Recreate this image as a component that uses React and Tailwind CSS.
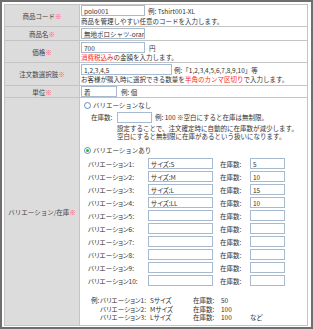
import React from 'react'

function Radio({ checked }) {
  return (
    <svg width="7" height="7" viewBox="0 0 14 14" className="shrink-0">
      <circle cx="7" cy="7" r="6" fill="#fff" stroke="#2a62a8" strokeWidth="1.4" />
      {checked && <circle cx="7" cy="7" r="3" fill="#2eb82e" />}
    </svg>
  )
}

function Box({ value, w }) {
  return (
    <div className={`h-[11px] ${w} shrink-0 border border-[#a7bad0] bg-white px-[2px] flex items-center text-[#333] overflow-hidden`}>
      {value}
    </div>
  )
}

function Label({ children }) {
  return (
    <div className="w-[75px] shrink-0 bg-[#dcdcdc] border-r border-[#c4c4c4] flex items-center justify-center text-[#444]">
      <span>{children}<span className="text-[#ff5a5a]">※</span></span>
    </div>
  )
}

const variations = [
  ['サイズ:S', '5'],
  ['サイズ:M', '10'],
  ['サイズ:L', '15'],
  ['サイズ:LL', '10'],
  ['', ''],
  ['', ''],
  ['', ''],
  ['', ''],
  ['', ''],
  ['', ''],
]

const examples = [
  ['例:', 'バリエーション1:', 'Sサイズ', '在庫数:', '50', ''],
  ['', 'バリエーション2:', 'Mサイズ', '在庫数:', '100', ''],
  ['', 'バリエーション3:', 'Lサイズ', '在庫数:', '100', 'など'],
]

export default function App() {
  return (
    <div className="w-[313px] h-[329px] overflow-hidden whitespace-nowrap border-2 border-[#6e6e6e] bg-white p-[2px] font-['Noto_Sans_CJK_JP','Noto_Sans',sans-serif] text-[6.5px] leading-[8px] text-[#333]">
      <div className="w-[304px] border border-[#c4c4c4]">
        {/* 商品コード */}
        <div className="flex h-[22px] border-b border-[#c4c4c4]">
          <Label>商品コード</Label>
          <div className="flex-1 pl-[1px]">
            <div className="flex items-center gap-[3px]">
              <Box value="polo001" w="w-[64px]" />
              <span>例: Tshirt001-XL</span>
            </div>
            <div className="pt-[1px]">商品を管理しやすい任意のコードを入力します。</div>
          </div>
        </div>
        {/* 商品名 */}
        <div className="flex h-[14px] border-b border-[#c4c4c4]">
          <Label>商品名</Label>
          <div className="flex-1 pl-[1px] pt-[1px]">
            <Box value="無地ポロシャツ-orange" w="w-[64px]" />
          </div>
        </div>
        {/* 価格 */}
        <div className="flex h-[22px] border-b border-[#c4c4c4]">
          <Label>価格</Label>
          <div className="flex-1 pl-[1px] pt-[1px]">
            <div className="flex items-center gap-[4px]">
              <Box value="700" w="w-[64px]" />
              <span>円</span>
            </div>
            <div><span className="text-[#ff1a1a]">消費税込み</span>の金額を入力します。</div>
          </div>
        </div>
        {/* 注文数選択肢 */}
        <div className="flex h-[23px] border-b border-[#c4c4c4]">
          <Label>注文数選択肢</Label>
          <div className="flex-1 pl-[1px] pt-[1px]">
            <div className="flex items-center gap-[2px]">
              <Box value="1,2,3,4,5" w="w-[91px]" />
              <span>例:「1,2,3,4,5,6,7,8,9,10」等</span>
            </div>
            <div>
              お客様が購入時に選択できる数量を<span className="text-[#ff1a1a]">半角のカンマ区切り</span>で入力します。
            </div>
          </div>
        </div>
        {/* 単位 */}
        <div className="flex h-[12px] border-b border-[#c4c4c4]">
          <Label>単位</Label>
          <div className="flex-1 pl-[1px] flex items-center gap-[4px]">
            <Box value="着" w="w-[36px]" />
            <span>例: 個</span>
          </div>
        </div>
        {/* バリエーション/在庫 */}
        <div className="flex h-[227px]">
          <Label>バリエーション/在庫</Label>
          <div className="flex-1 pl-[4px] pt-[3px]">
            <div className="flex items-center gap-[2px] h-[8px]">
              <Radio />
              <span>バリエーションなし</span>
            </div>
            <div className="flex items-center mt-[3px] h-[10px] pl-[7px] gap-[2px]">
              <span className="w-[24px]">在庫数:</span>
              <Box value="" w="w-[35px] h-[10px]" />
              <span className="ml-[1px]">例: 100 ※空白にすると在庫は無制限。</span>
            </div>
            <div className="pl-[33px] pt-[2px]">
              <div>設定することで、注文確定時に自動的に在庫数が減少します。</div>
              <div>空白にすると無制限に在庫があるという扱いになります。</div>
            </div>
            <div className="flex items-center gap-[2px] h-[8px] mt-[6px]">
              <Radio checked />
              <span>バリエーションあり</span>
            </div>
            <div className="mt-[3px] [font-feature-settings:'palt']">
              {variations.map(([name, stock], i) => (
                <div key={i} className="flex items-center h-[13px] pl-[4px]">
                  <span className="w-[60px]">バリエーション{i + 1}:</span>
                  <Box value={name} w="w-[65px] h-[10px]" />
                  <span className="ml-[7px] w-[30px]">在庫数:</span>
                  <Box value={stock} w="w-[35px] h-[10px]" />
                </div>
              ))}
            </div>
            <div className="mt-[9px] pl-[7px] [font-feature-settings:'palt']">
              {examples.map((r, i) => (
                <div key={i} className="flex h-[8.5px] items-center">
                  <span className="w-[9px]">{r[0]}</span>
                  <span className="w-[50px]">{r[1]}</span>
                  <span className="w-[43px]">{r[2]}</span>
                  <span className="w-[28px]">{r[3]}</span>
                  <span className="w-[29px]">{r[4]}</span>
                  <span>{r[5]}</span>
                </div>
              ))}
            </div>
          </div>
        </div>
      </div>
    </div>
  )
}
